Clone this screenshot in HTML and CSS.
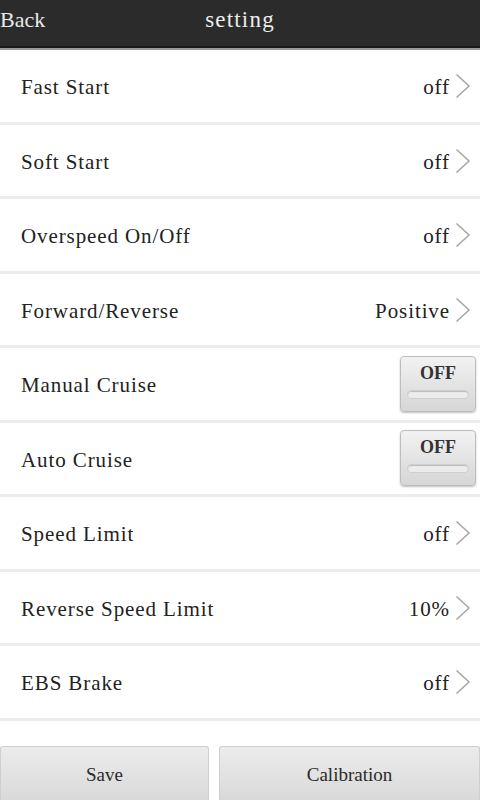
FILE: index.html
```html
<!DOCTYPE html>
<html lang="en">
<head>
    <meta charset="UTF-8">
    <meta name="viewport" content="width=device-width, initial-scale=1.0">
    <title>setting</title>
    <link rel="stylesheet" href="styles.css">
</head>
<body>
    <div id="app">
        <div class="topbar">
            <a class="back" href="#">Back</a>
            <span class="title">setting</span>
        </div>

        <ul class="list">
            <li class="row"><span class="label">Fast Start</span><span class="value">off</span><span class="arrow"></span></li>
            <li class="row"><span class="label">Soft Start</span><span class="value">off</span><span class="arrow"></span></li>
            <li class="row"><span class="label">Overspeed On/Off</span><span class="value">off</span><span class="arrow"></span></li>
            <li class="row"><span class="label">Forward/Reverse</span><span class="value">Positive</span><span class="arrow"></span></li>
            <li class="row"><span class="label">Manual Cruise</span><button class="toggle">OFF</button></li>
            <li class="row"><span class="label">Auto Cruise</span><button class="toggle">OFF</button></li>
            <li class="row"><span class="label">Speed Limit</span><span class="value">off</span><span class="arrow"></span></li>
            <li class="row"><span class="label">Reverse Speed Limit</span><span class="value">10%</span><span class="arrow"></span></li>
            <li class="row"><span class="label">EBS Brake</span><span class="value">off</span><span class="arrow"></span></li>
        </ul>

        <div class="footer">
            <button class="btn save">Save</button>
            <button class="btn calib">Calibration</button>
        </div>
    </div>
</body>
</html>
```

FILE: styles.css
```css
html, body { margin: 0; padding: 0; }
body { font-family: "Liberation Serif", "Times New Roman", serif; background: #fff; color: #222; }

#app { width: 480px; height: 800px; display: flex; flex-direction: column; overflow: hidden; }

/* top bar */
.topbar {
  height: 46px;
  background: #2b2b2b;
  border-bottom: 2px solid #1a1a1a;
  box-shadow: 0 2px 0 #9a9a9a;
  margin-bottom: 2px;
  display: flex;
  align-items: center;
  justify-content: center;
  position: relative;
  flex-shrink: 0;
}
.back {
  position: absolute; left: 0; top: 7px;
  color: #e8e8e8; text-decoration: none;
  font-size: 22px;
}
.title { color: #ededed; font-size: 23px; letter-spacing: 1.2px; margin-top: -6px; }

/* settings list */
.list { list-style: none; margin: 0; padding: 0; flex: 1; overflow: hidden; }
.row {
  height: 74.5px;
  box-sizing: border-box;
  border-bottom: 3px solid #ececec;
  display: flex;
  align-items: center;
  padding: 4px 9px 0 21px;
  font-size: 21px;
  letter-spacing: 0.9px;
}
.label { flex: 1; }
.value { margin-right: 5px; }
.arrow {
  width: 16px; height: 26px;
  margin-top: -3px;
  background: no-repeat center / 16px 26px url("data:image/svg+xml,%3Csvg xmlns='http://www.w3.org/2000/svg' viewBox='0 0 16 26'%3E%3Cpath d='M1.5 1.5 L14 13 L1.5 24.5' fill='none' stroke='%23a8a8a8' stroke-width='1.6'/%3E%3C/svg%3E");
}

.toggle {
  width: 76px; height: 56px;
  margin: -4px -5px 0 0;
  border: 1px solid #bdbdbd;
  border-radius: 4px;
  background: linear-gradient(#f2f2f2, #d6d6d6);
  box-shadow: 0 1px 2px rgba(0,0,0,0.25);
  font-family: inherit;
  font-weight: bold;
  font-size: 18px;
  color: #333;
  padding: 6px 0 0;
  display: flex;
  flex-direction: column;
  align-items: center;
  gap: 6px;
}
.toggle::after {
  content: "";
  width: 60px; height: 7px;
  border-radius: 4px;
  background: #ececec;
  border: 1px solid #cfcfcf;
  box-shadow: inset 0 1px 1px #bcbcbc;
}

/* bottom buttons */
.footer { height: 54px; display: flex; gap: 10px; flex-shrink: 0; background: #fff; }
.btn {
  border: 1px solid #cfcfcf;
  border-bottom: none;
  border-radius: 3px 3px 0 0;
  background: linear-gradient(#ececec, #d9d9d9);
  font-family: inherit;
  font-size: 19px;
  color: #2a2a2a;
  padding-top: 4px;
}
.save { width: 209px; }
.calib { flex: 1; }
```
